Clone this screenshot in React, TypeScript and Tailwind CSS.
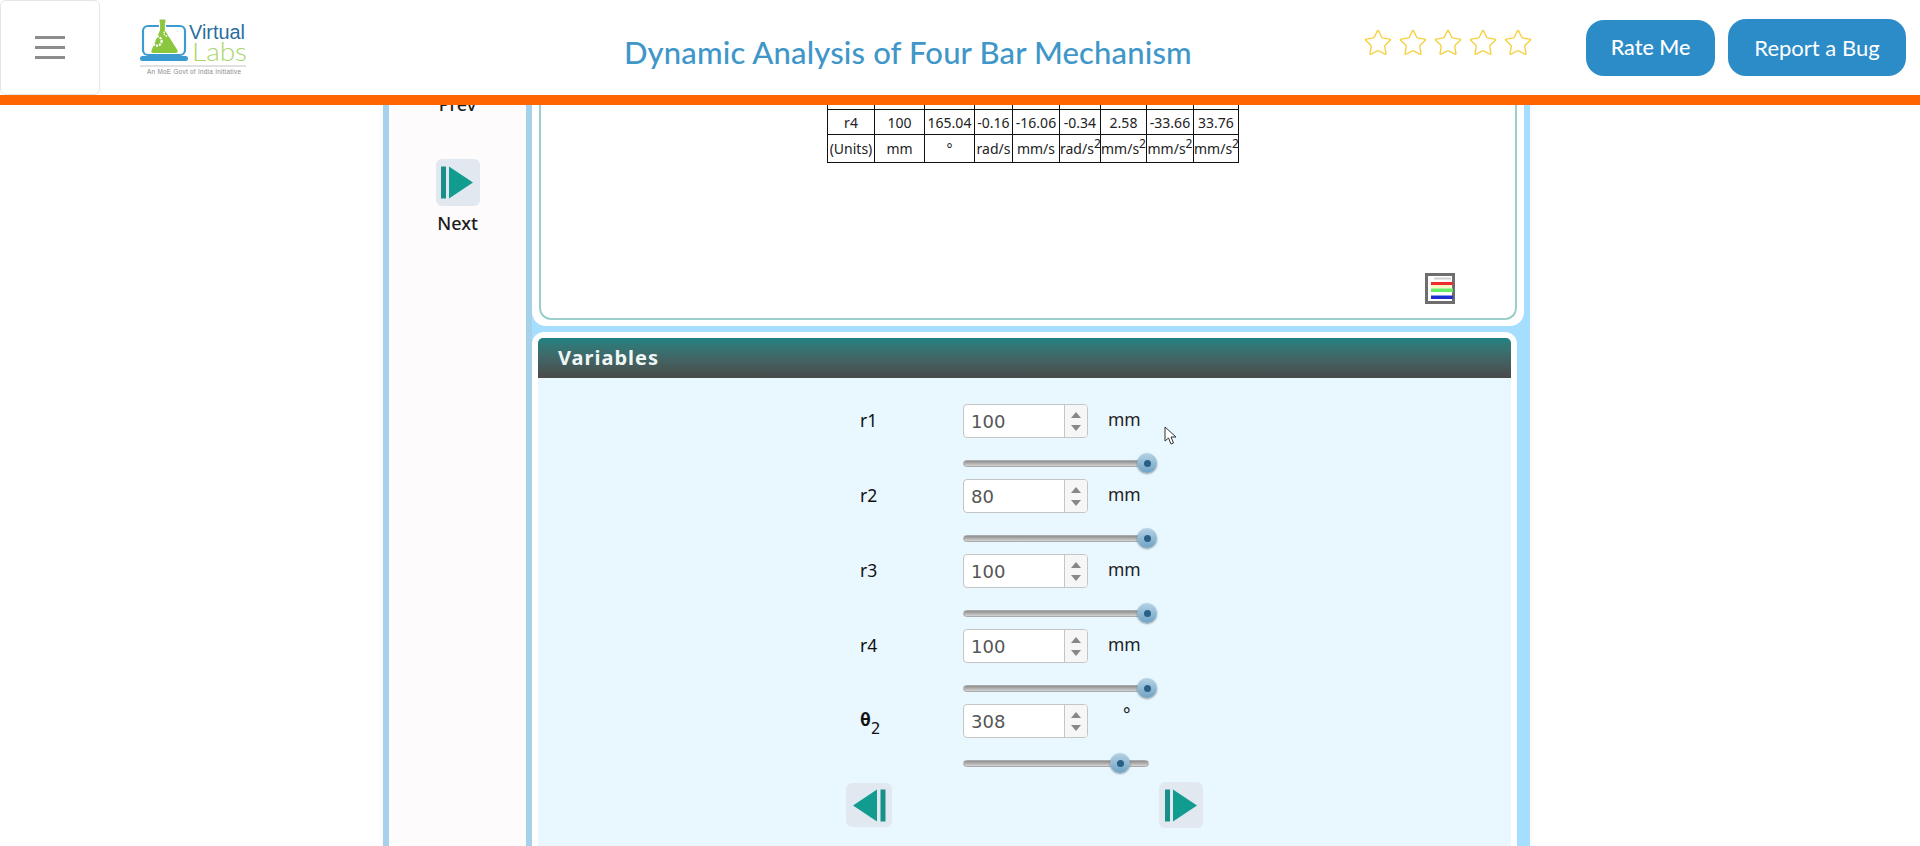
import { Star } from 'lucide-react'

const tableRows = [
  ['r4', '100', '165.04', '-0.16', '-16.06', '-0.34', '2.58', '-33.66', '33.76'],
]
const colWidths = ['w-[47px]', 'w-[50px]', 'w-[50px]', 'w-[38px]', 'w-[47px]', 'w-[41px]', 'w-[46px]', 'w-[47px]', 'w-[45px]']

const variables = [
  { name: 'r1', value: '100', unit: 'mm', thumb: 184 },
  { name: 'r2', value: '80', unit: 'mm', thumb: 184 },
  { name: 'r3', value: '100', unit: 'mm', thumb: 184 },
  { name: 'r4', value: '100', unit: 'mm', thumb: 184 },
  { name: 'θ2', value: '308', unit: '°', thumb: 157 },
]

const Logo = () => (
  <svg width="108" height="60" viewBox="0 0 108 60" className="ml-[40px] shrink-0">
    <rect x="3" y="8" width="42" height="29" rx="5" fill="none" stroke="#3b9bd0" strokeWidth="2.2" />
    <rect x="0" y="38" width="48" height="5" rx="2.5" fill="#3b9bd0" />
    <path d="M19 5 L19 1 L26 1 L26 5 L25.5 5 L25.5 12 L38 32 Q39 35.5 36 35.5 L13 35.5 Q10 35.5 11 32 L19.5 12 L19.5 5 Z" fill="#8cc63f" stroke="#fff" strokeWidth="1.2" />
    <circle cx="17" cy="23" r="4.6" fill="none" stroke="#fff" strokeWidth="2.2" strokeDasharray="2 1" />
    <circle cx="27" cy="15" r="3" fill="none" stroke="#fff" strokeWidth="1.4" strokeDasharray="1.5 0.8" />
    <text x="49" y="21" fontSize="20" fontFamily="'Liberation Sans', sans-serif" fill="#2a6f9e" textLength="56" lengthAdjust="spacingAndGlyphs">Virtual</text>
    <text x="52" y="43" fontSize="26" fontWeight="300" fontFamily="'Lato', sans-serif" fill="#a9d66b" textLength="55" lengthAdjust="spacingAndGlyphs">Labs</text>
    <rect x="0" y="47.5" width="106" height="1" fill="#c4c4c4" />
    <text x="7" y="56" fontSize="6.4" fontFamily="'Liberation Sans', sans-serif" fill="#8a8a8a" textLength="94">An MoE Govt of India Initiative</text>
  </svg>
)

const SkipIcon = ({ dir, className }: { dir: 'next' | 'prev'; className: string }) => (
  <div className={`flex items-center justify-center rounded-[6px] bg-[#e2e8f0] ${className}`}>
    <svg width="33" height="33" viewBox="0 0 33 33">
      {dir === 'next' ? (
        <>
          <rect x="0" y="0.5" width="5" height="32" fill="#1a8f8a" />
          <polygon points="8,0.5 32,16.5 8,32.5" fill="#129c90" />
        </>
      ) : (
        <>
          <polygon points="0,16.5 24,0.5 24,32.5" fill="#129c90" />
          <rect x="27.5" y="0.5" width="5" height="32" fill="#1a8f8a" />
        </>
      )}
    </svg>
  </div>
)

const LegendIcon = () => (
  <svg width="30" height="31" viewBox="0 0 30 31" className="shrink-0">
    <rect x="1.5" y="1.5" width="27" height="28" fill="#fff" stroke="#6e6e6e" strokeWidth="3" />
    <rect x="9" y="4.5" width="17" height="2" fill="#d0d0d0" />
    <rect x="6" y="9" width="22" height="3" fill="#ee2a2a" />
    <rect x="6" y="12" width="20" height="3.5" fill="#f8f4c4" />
    <rect x="6" y="15.5" width="22" height="3.5" fill="#66ee66" />
    <rect x="6" y="19" width="20" height="3" fill="#fff" />
    <rect x="6" y="22.5" width="22" height="3.5" fill="#1c2fd0" />
  </svg>
)

const VariableRow = ({ name, value, unit, thumb }: (typeof variables)[number]) => (
  <div className="h-[75px] ml-[322px]">
    <div className="flex items-center h-[34px]">
      <div className="w-[103px] text-[17.5px] text-[#111] font-['Noto_Sans',sans-serif] -mt-[2px]">
        {name === 'θ2' ? (
          <span className="font-['DejaVu_Sans_Mono',monospace] text-[18px] relative -top-[1px]">
            <b>θ</b>
            <sub className="font-normal text-[16px] align-[-4px] leading-none">2</sub>
          </span>
        ) : (
          name
        )}
      </div>
      <div className="flex w-[125px] h-[34px] bg-white border border-[#c5c5c5] rounded-[4px] overflow-hidden">
        <div className="w-[100px] pl-[7px] text-[18px] leading-[33px] text-[#555] font-['DejaVu_Sans',sans-serif]">{value}</div>
        <div className="flex-1 flex flex-col items-center justify-center gap-[7px] bg-[#f6f6f6] border-l border-[#c5c5c5]">
          <svg width="10" height="6" viewBox="0 0 10 6"><polygon points="5,0 10,6 0,6" fill="#888" /></svg>
          <svg width="10" height="6" viewBox="0 0 10 6"><polygon points="0,0 10,0 5,6" fill="#888" /></svg>
        </div>
      </div>
      <div className={`text-[17.5px] text-[#222] font-['Noto_Sans',sans-serif] -mt-[3px] ${unit === '°' ? 'ml-[35px] -translate-y-[5px]' : 'ml-[20px]'}`}>{unit}</div>
    </div>
    <div className="relative w-[186px] h-[7px] mt-[22px] ml-[103px] rounded-full border border-[#aaa] bg-gradient-to-b from-[#8f8f8f] to-[#d4d4d4]">
      <div
        className="absolute top-[-8px] w-[20px] h-[20px] -ml-[11px] rounded-full flex items-center justify-center bg-gradient-to-b from-[#b5d3e6] to-[#6fa3c4] shadow-[0_1px_2px_rgba(0,0,0,0.4)]"
        style={{ left: thumb }}
      >
        <div className="w-[7px] h-[7px] rounded-full bg-[#2a5f85]" />
      </div>
    </div>
  </div>
)

export default function App() {
  return (
    <div className="h-[846px] w-full overflow-hidden bg-white flex flex-col font-['Lato',sans-serif]">
      {/* Top bar sits above the scrolled content */}
      <header className="relative z-10 h-[105px] shrink-0 flex items-center bg-white border-b-[10px] border-[#ff6600]">
        <button className="w-[100px] h-[95px] shrink-0 flex flex-col items-center justify-center gap-[7px] bg-white border border-[#e6e6e6] rounded-[6px]">
          <span className="block w-[30px] h-[3px] bg-[#8c8c8c]" />
          <span className="block w-[30px] h-[3px] bg-[#8c8c8c]" />
          <span className="block w-[30px] h-[3px] bg-[#8c8c8c]" />
        </button>
        <Logo />
        <h1 className="ml-[376px] text-[31px] font-medium tracking-[0.15px] text-[#3f97c9] whitespace-nowrap mt-[9px]">
          Dynamic Analysis of Four Bar Mechanism
        </h1>
        <div className="ml-auto flex items-center pr-[14px]">
          <div className="flex gap-[5px] mr-[53px] -mt-[9px]">
            {[0, 1, 2, 3, 4].map((i) => (
              <Star key={i} size={30} strokeWidth={1.1} className="text-[#f4d03f]" />
            ))}
          </div>
          <button className="w-[129px] h-[56px] rounded-[18px] bg-[#2b8cc8] text-white text-[21.5px] font-medium">Rate Me</button>
          <button className="w-[178px] h-[57px] ml-[13px] rounded-[18px] bg-[#2b8cc8] text-white text-[22px]">Report a Bug</button>
        </div>
      </header>

      <div className="flex flex-1 min-h-0 ml-[383px] w-[1147px] -mt-[45px] shadow-[0_0_6px_rgba(0,0,0,0.05)]">
        {/* Side navigation */}
        <aside className="w-[149px] shrink-0 flex flex-col items-center pt-[32px] bg-[#fdfbfc] border-x-[6px] border-[#a6d1ea] text-[18px] leading-[24px] font-medium text-[#1c1c1c] font-['Noto_Sans',sans-serif]">
          <div>Prev</div>
          <SkipIcon dir="next" className="w-[44px] h-[47px] mt-[43px]" />
          <div className="mt-[5px]">Next</div>
        </aside>

        <main className="flex-1 min-w-0 flex flex-col bg-[#a5defe]">
          {/* Table panel */}
          <section className="h-[266px] w-[992px] shrink-0 bg-white rounded-b-[14px] px-[7px] pb-[6px]">
            <div className="h-full flex flex-col border-x-2 border-b-2 border-[#9ccfcb] rounded-b-[12px] pt-[24px]">
              <table className="ml-[286px] w-[411px] table-fixed border-collapse text-[14px] text-[#222] text-center font-['Noto_Sans',sans-serif]">
                <tbody>
                  <tr className="h-[25px]">
                    {colWidths.map((w, i) => (
                      <td key={i} className={`border border-[#111] p-0 ${w}`} />
                    ))}
                  </tr>
                  {tableRows.map((row) => (
                    <tr key={row[0]} className="h-[25px]">
                      {row.map((cell, i) => (
                        <td key={i} className={`border border-[#111] p-0 whitespace-nowrap ${colWidths[i]}`}>{cell}</td>
                      ))}
                    </tr>
                  ))}
                  <tr className="h-[28px]">
                    <td className="border border-[#111] p-0">(Units)</td>
                    <td className="border border-[#111] p-0">mm</td>
                    <td className="border border-[#111] p-0">°</td>
                    <td className="border border-[#111] p-0">rad/s</td>
                    <td className="border border-[#111] p-0">mm/s</td>
                    <td className="border border-[#111] p-0 whitespace-nowrap">rad/s<sup className="text-[12px]">2</sup></td>
                    <td className="border border-[#111] p-0 whitespace-nowrap">mm/s<sup className="text-[12px]">2</sup></td>
                    <td className="border border-[#111] p-0 whitespace-nowrap">mm/s<sup className="text-[12px]">2</sup></td>
                    <td className="border border-[#111] p-0 whitespace-nowrap">mm/s<sup className="text-[12px]">2</sup></td>
                  </tr>
                </tbody>
              </table>
              <div className="mt-auto mb-[14px] flex justify-end pr-[60px]">
                <LegendIcon />
              </div>
            </div>
          </section>

          {/* Variables panel */}
          <section className="w-[985px] flex-1 mt-[6px] bg-white rounded-t-[12px] px-[6px] pt-[6px]">
            <div className="h-[40px] flex items-center pl-[20px] rounded-t-[5px] bg-gradient-to-b from-[#1f8282] to-[#4a4a4a] text-[20px] font-bold tracking-[1px] text-[#eef6f6] font-['Noto_Sans',sans-serif]">
              Variables
            </div>
            <div className="h-full bg-[#e9f7fe] pt-[26px]">
              {variables.map((v) => (
                <VariableRow key={v.name} {...v} />
              ))}
              <div className="flex items-start mt-[4px] ml-[308px]">
                <SkipIcon dir="prev" className="w-[46px] h-[44px]" />
                <SkipIcon dir="next" className="w-[44px] h-[46px] ml-[267px] -mt-[1px]" />
              </div>
            </div>
          </section>
        </main>
      </div>

      {/* Mouse pointer captured in the screenshot */}
      <svg width="13" height="19" viewBox="0 0 13 19" className="fixed left-[1164px] top-[426px]">
        <path d="M1 1 L1 15 L4.5 12 L7 18 L9.5 17 L7 11 L12 11 Z" fill="#fff" stroke="#333" strokeWidth="1" />
      </svg>
    </div>
  )
}
